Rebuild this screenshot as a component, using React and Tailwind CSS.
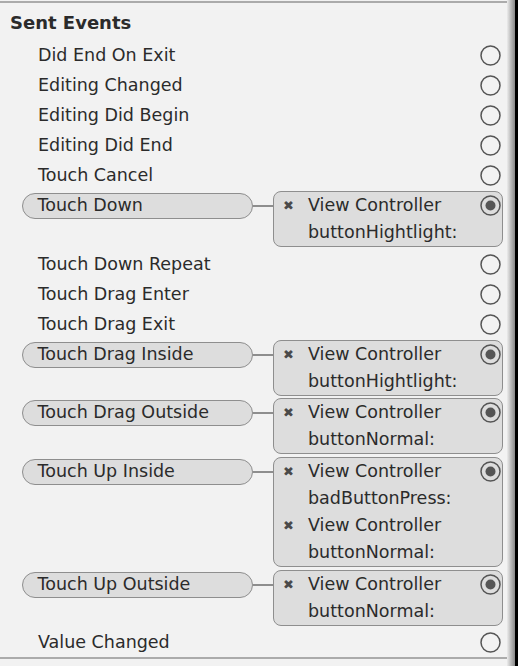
import React from 'react';

const events = [
  { name: 'Did End On Exit' },
  { name: 'Editing Changed' },
  { name: 'Editing Did Begin' },
  { name: 'Editing Did End' },
  { name: 'Touch Cancel' },
  { name: 'Touch Down', targets: [['View Controller', 'buttonHightlight:']], pad: 'pt-[1px] pb-[2px]' },
  { name: 'Touch Down Repeat' },
  { name: 'Touch Drag Enter' },
  { name: 'Touch Drag Exit' },
  { name: 'Touch Drag Inside', targets: [['View Controller', 'buttonHightlight:']], pad: 'py-[1px]' },
  { name: 'Touch Drag Outside', targets: [['View Controller', 'buttonNormal:']], pad: 'py-[1px]' },
  {
    name: 'Touch Up Inside',
    targets: [
      ['View Controller', 'badButtonPress:'],
      ['View Controller', 'buttonNormal:'],
    ],
    pad: 'py-[2px]',
  },
  { name: 'Touch Up Outside', targets: [['View Controller', 'buttonNormal:']], pad: 'py-[1px]' },
  { name: 'Value Changed' },
];

function Radio({ on }) {
  return (
    <svg width="21" height="21" viewBox="0 0 21 21" className="shrink-0">
      <circle cx="10.5" cy="10.5" r="9.5" fill="none" stroke="#555555" strokeWidth="1.5" />
      {on && <circle cx="10.5" cy="10.5" r="5" fill="#555555" />}
    </svg>
  );
}

function PlainRow({ name }) {
  return (
    <div className="flex items-center h-[30px] pr-[6px]">
      <span className="flex-1 pl-[38px] pt-[1px]">{name}</span>
      <Radio />
    </div>
  );
}

function ConnectedRow({ name, targets, pad }) {
  return (
    <div className={`flex items-start ${pad}`}>
      <div className="flex items-center h-[27px] mt-[1px]">
        <div className="ml-[22px] w-[231px] h-[26px] flex items-center rounded-full border-[1.5px] border-[#8e8e8e] bg-[#dddddd] pl-[14.5px]">
          {name}
        </div>
        <div className="w-[20px] h-[2px] bg-[#8e8e8e]" />
      </div>
      <div className="w-[230px] rounded-[8px] border-[1.5px] border-[#8e8e8e] bg-[#dddddd]">
        {targets.map(([obj, action], i) => (
          <div key={i}>
            <div className="flex items-center h-[27px] pr-[1px]">
              <span className="w-[34px] pl-[9px] text-[13px] text-[#4a4a4a]">✖</span>
              <span className="flex-1">{obj}</span>
              {i === 0 && <Radio on />}
            </div>
            <div className="flex items-center h-[27px] pl-[34px]">{action}</div>
          </div>
        ))}
      </div>
    </div>
  );
}

export default function App() {
  return (
    <div
      className="flex h-[666px] w-[518px] bg-[#f2f2f2] text-[#2b2b2b] text-[17.5px]"
      style={{ fontFamily: '"DejaVu Sans", sans-serif' }}
    >
      <div className="w-[507px] flex flex-col">
        <div className="mt-[1px] border-t-2 border-[#ababab]" />
        <div className="h-[37px] flex items-center pl-[10px] pt-[1px] font-bold text-[18px]">Sent Events</div>
        {events.map((e) =>
          e.targets ? <ConnectedRow key={e.name} {...e} /> : <PlainRow key={e.name} name={e.name} />
        )}
        <div className="border-t-2 border-[#ababab]" />
      </div>
      <div className="w-[8px] bg-gradient-to-r from-[#ececec] to-[#8a8a8a]" />
      <div className="w-[3px] bg-black" />
    </div>
  );
}
